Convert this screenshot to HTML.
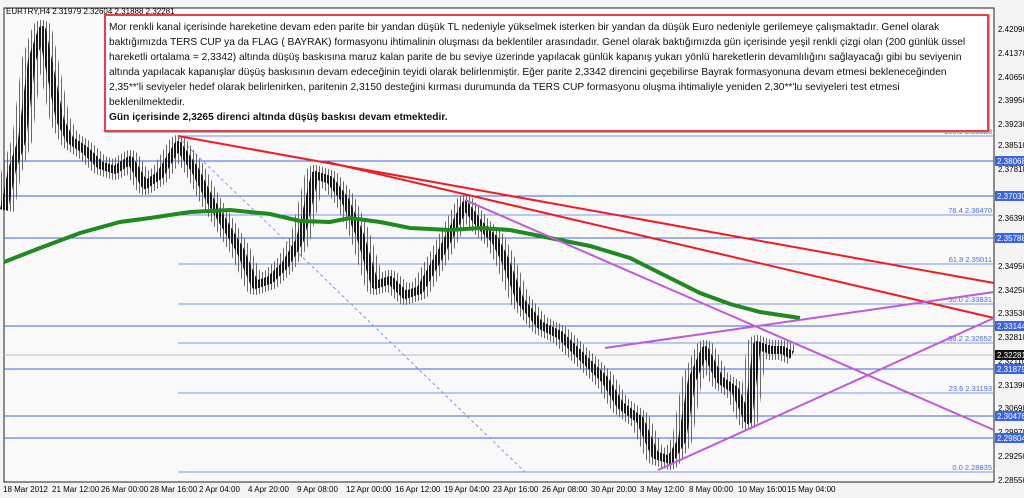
<!DOCTYPE html>
<html><head><meta charset="utf-8"><style>
body{margin:0;width:1024px;height:498px;overflow:hidden;background:#f4f4f4;font-family:"Liberation Sans",sans-serif}
#c{position:absolute;left:0;top:0}
.box{position:absolute;left:104px;top:14px;width:876px;height:110px;background:#fff;border:2px solid #e8404a;box-shadow:1px 1px 0 #b0b0b0;font-size:10.2px;line-height:15px;padding:4px 2px 0 3px;color:#111;white-space:nowrap;overflow:hidden}
</style></head><body>
<svg id="c" width="1024" height="498" xmlns="http://www.w3.org/2000/svg">
<defs>
<pattern id="wk" x="0" y="0" width="3" height="10" patternUnits="userSpaceOnUse"><rect x="1" y="0" width="1" height="10" fill="#666"/></pattern>
<pattern id="bd" x="0" y="0" width="3" height="10" patternUnits="userSpaceOnUse"><rect x="0" y="0" width="2" height="10" fill="#1a1a1a"/></pattern>
</defs>
<rect x="0" y="0" width="1024" height="498" fill="#f4f4f4"/>
<rect x="4" y="8" width="990" height="474" fill="#f9f9f9" stroke="#222" stroke-width="1"/>
<text x="6" y="14" font-size="8" font-family="Liberation Sans" fill="#000">EURTRY,H4  2.31979 2.32604 2.31888 2.32281</text>
<g stroke="#3a63e8" stroke-width="1">
<line x1="4" y1="161" x2="994" y2="161"/><line x1="4" y1="196" x2="994" y2="196"/>
<line x1="4" y1="238" x2="994" y2="238"/><line x1="4" y1="326" x2="994" y2="326"/>
<line x1="4" y1="369" x2="994" y2="369"/><line x1="4" y1="416" x2="994" y2="416"/>
<line x1="4" y1="438" x2="994" y2="438"/>
</g>
<g stroke="#7a94ee" stroke-width="1">
<line x1="178" y1="136" x2="994" y2="136"/><line x1="178" y1="215" x2="994" y2="215"/>
<line x1="178" y1="264" x2="994" y2="264"/><line x1="178" y1="304" x2="994" y2="304"/>
<line x1="178" y1="343" x2="994" y2="343"/><line x1="178" y1="393" x2="994" y2="393"/>
<line x1="178" y1="472" x2="994" y2="472"/>
</g>
<line x1="4" y1="355" x2="994" y2="355" stroke="#bbb"/>
<g font-size="7.5" fill="#4a6ee0" text-anchor="end" font-family="Liberation Sans">
<text x="992" y="134">100.0 2.38828</text><text x="992" y="213">76.4 2.36470</text>
<text x="992" y="262">61.8 2.35011</text><text x="992" y="302">50.0 2.33831</text>
<text x="992" y="341">38.2 2.32652</text><text x="992" y="391">23.6 2.31193</text>
<text x="992" y="470">0.0 2.28835</text></g>
<line x1="178" y1="137" x2="525" y2="472" stroke="#7a94ee" stroke-dasharray="3,3"/>
<g fill="none" stroke-linejoin="round" stroke-linecap="butt">
<polyline stroke="url(#wk)" stroke-width="20" points="4,210 12,170 22,140 32,60 42,30 50,70 60,120 70,140 85,150 100,165 115,170 130,160 145,185 160,175 178,145 195,170 210,200 225,225 240,250 255,285 270,280 285,265 300,240 315,175 330,180 345,200 360,235 375,285 390,280 405,295 420,290 440,255 465,205 480,225 495,240 505,260 520,300 540,325 560,335 575,350 590,365 605,380 620,405 640,420 655,455 670,460 682,440 692,380 705,350 720,380 735,390 748,420 757,345 770,350 782,350 792,355"/>
<polyline stroke="url(#bd)" stroke-width="8" points="4,210 12,170 22,140 32,60 42,30 50,70 60,120 70,140 85,150 100,165 115,170 130,160 145,185 160,175 178,145 195,170 210,200 225,225 240,250 255,285 270,280 285,265 300,240 315,175 330,180 345,200 360,235 375,285 390,280 405,295 420,290 440,255 465,205 480,225 495,240 505,260 520,300 540,325 560,335 575,350 590,365 605,380 620,405 640,420 655,455 670,460 682,440 692,380 705,350 720,380 735,390 748,420 757,345 770,350 782,350 792,355"/>
</g>
<polyline fill="none" stroke="#1f8a1f" stroke-width="4" points="4,262 40,248 80,233 120,222 150,218 190,212 230,210 270,214 300,221 330,222 350,218 380,222 410,228 450,230 480,228 510,230 550,238 590,246 630,258 670,278 700,293 730,304 760,312 800,318"/>
<line x1="178" y1="136" x2="994" y2="283" stroke="#ee1c25" stroke-width="2"/>
<line x1="327" y1="162" x2="994" y2="318" stroke="#ee1c25" stroke-width="2"/>
<g stroke="#c05ad8" stroke-width="2">
<line x1="465" y1="200" x2="994" y2="430"/>
<line x1="658" y1="470" x2="994" y2="318"/>
<line x1="605" y1="348" x2="994" y2="292"/>
</g>
<g font-size="8" fill="#000" font-family="Liberation Sans">
<text x="998" y="32">2.42090</text><text x="998" y="56">2.41370</text><text x="998" y="80">2.40650</text>
<text x="998" y="103">2.39950</text><text x="998" y="127">2.39230</text><text x="998" y="148">2.38510</text>
<text x="998" y="172">2.37810</text><text x="998" y="221">2.36390</text><text x="998" y="269">2.34950</text>
<text x="998" y="293">2.34250</text><text x="998" y="316">2.33530</text><text x="998" y="340">2.32810</text>
<text x="998" y="364">2.32110</text><text x="998" y="388">2.31390</text><text x="998" y="411">2.30690</text>
<text x="998" y="435">2.29970</text><text x="998" y="459">2.29250</text><text x="998" y="483">2.28550</text>
</g>
<g font-size="8" fill="#fff" font-family="Liberation Sans">
<rect x="995" y="156" width="29" height="10" fill="#3a63e8"/><text x="997" y="164">2.38068</text>
<rect x="995" y="191" width="29" height="10" fill="#3a63e8"/><text x="997" y="199">2.37030</text>
<rect x="995" y="233" width="29" height="10" fill="#3a63e8"/><text x="997" y="241">2.35788</text>
<rect x="995" y="321" width="29" height="10" fill="#3a63e8"/><text x="997" y="329">2.33144</text>
<rect x="995" y="364" width="29" height="10" fill="#3a63e8"/><text x="997" y="372">2.31879</text>
<rect x="995" y="411" width="29" height="10" fill="#3a63e8"/><text x="997" y="419">2.30476</text>
<rect x="995" y="433" width="29" height="10" fill="#3a63e8"/><text x="997" y="441">2.29804</text>
<rect x="995" y="350" width="29" height="10" fill="#111"/><text x="997" y="358">2.32281</text>
</g>
<g font-size="8" fill="#000" font-family="Liberation Sans">
<text x="3" y="492">18 Mar 2012</text><text x="52" y="492">21 Mar 12:00</text><text x="101" y="492">26 Mar 00:00</text>
<text x="150" y="492">28 Mar 16:00</text><text x="199" y="492">2 Apr 04:00</text><text x="248" y="492">4 Apr 20:00</text>
<text x="297" y="492">9 Apr 08:00</text><text x="346" y="492">12 Apr 00:00</text><text x="395" y="492">16 Apr 12:00</text>
<text x="444" y="492">19 Apr 04:00</text><text x="493" y="492">23 Apr 16:00</text><text x="542" y="492">26 Apr 08:00</text>
<text x="591" y="492">30 Apr 20:00</text><text x="640" y="492">3 May 12:00</text><text x="689" y="492">8 May 00:00</text>
<text x="738" y="492">10 May 16:00</text><text x="787" y="492">15 May 04:00</text>
</g>
</svg>
<div class="box">Mor renkli kanal içerisinde hareketine devam eden parite bir yandan düşük TL nedeniyle yükselmek isterken bir yandan da düşük Euro nedeniyle gerilemeye çalışmaktadır. Genel olarak<br>baktığımızda TERS CUP ya da FLAG ( BAYRAK) formasyonu ihtimalinin oluşması da beklentiler arasındadır. Genel olarak baktığımızda gün içerisinde yeşil renkli çizgi olan (200 günlük üssel<br>hareketli ortalama = 2,3342) altında düşüş baskısına maruz kalan parite de bu seviye üzerinde yapılacak günlük kapanış yukarı yönlü hareketlerin devamlılığını sağlayacağı gibi bu seviyenin<br>altında yapılacak kapanışlar düşüş baskısının devam edeceğinin teyidi olarak belirlenmiştir. Eğer parite 2,3342 direncini geçebilirse Bayrak formasyonuna devam etmesi bekleneceğinden<br>2,35**'li seviyeler hedef olarak belirlenirken, paritenin 2,3150 desteğini kırması durumunda da TERS CUP formasyonu oluşma ihtimaliyle yeniden 2,30**'lu seviyeleri test etmesi<br>beklenilmektedir.<br><b>Gün içerisinde 2,3265 direnci altında düşüş baskısı devam etmektedir.</b></div>
</body></html>
